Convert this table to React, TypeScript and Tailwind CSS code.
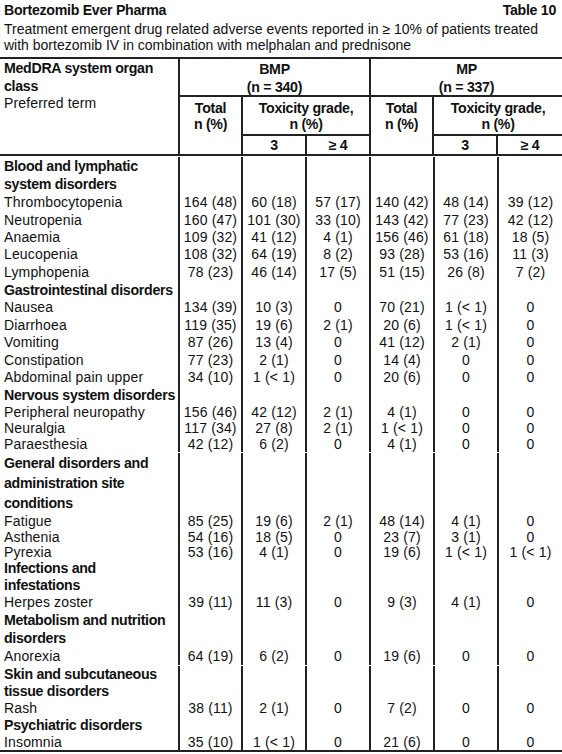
import React from "react";

const FONT = "font-['Liberation_Sans',Arial,sans-serif]";
const B = "border-[#222]";
const BOLD = "font-bold text-[14.2px] tracking-[-0.3px]";

type Row =
  | { kind: "cat"; lines: string[]; cls: string }
  | { kind: "data"; name: string; vals: string[]; cls: string };

const rows: Row[] = [
  { kind: "cat", lines: ["Blood and lymphatic", "system disorders"], cls: "h-[37px] pt-[1px] leading-[18px]" },
  { kind: "data", name: "Thrombocytopenia", vals: ["164 (48)", "60 (18)", "57 (17)", "140 (42)", "48 (14)", "39 (12)"], cls: "h-[18px]" },
  { kind: "data", name: "Neutropenia", vals: ["160 (47)", "101 (30)", "33 (10)", "143 (42)", "77 (23)", "42 (12)"], cls: "h-[18px]" },
  { kind: "data", name: "Anaemia", vals: ["109 (32)", "41 (12)", "4 (1)", "156 (46)", "61 (18)", "18 (5)"], cls: "h-[17px]" },
  { kind: "data", name: "Leucopenia", vals: ["108 (32)", "64 (19)", "8 (2)", "93 (28)", "53 (16)", "11 (3)"], cls: "h-[17px]" },
  { kind: "data", name: "Lymphopenia", vals: ["78 (23)", "46 (14)", "17 (5)", "51 (15)", "26 (8)", "7 (2)"], cls: "h-[18px]" },
  { kind: "cat", lines: ["Gastrointestinal disorders"], cls: "h-[18px] leading-[18px]" },
  { kind: "data", name: "Nausea", vals: ["134 (39)", "10 (3)", "0", "70 (21)", "1 (< 1)", "0"], cls: "h-[17px]" },
  { kind: "data", name: "Diarrhoea", vals: ["119 (35)", "19 (6)", "2 (1)", "20 (6)", "1 (< 1)", "0"], cls: "h-[18px]" },
  { kind: "data", name: "Vomiting", vals: ["87 (26)", "13 (4)", "0", "41 (12)", "2 (1)", "0"], cls: "h-[17px]" },
  { kind: "data", name: "Constipation", vals: ["77 (23)", "2 (1)", "0", "14 (4)", "0", "0"], cls: "h-[18px]" },
  { kind: "data", name: "Abdominal pain upper", vals: ["34 (10)", "1 (< 1)", "0", "20 (6)", "0", "0"], cls: "h-[17px]" },
  { kind: "cat", lines: ["Nervous system disorders"], cls: "h-[18px] leading-[18px]" },
  { kind: "data", name: "Peripheral neuropathy", vals: ["156 (46)", "42 (12)", "2 (1)", "4 (1)", "0", "0"], cls: "h-[16px]" },
  { kind: "data", name: "Neuralgia", vals: ["117 (34)", "27 (8)", "2 (1)", "1 (< 1)", "0", "0"], cls: "h-[16px]" },
  { kind: "data", name: "Paraesthesia", vals: ["42 (12)", "6 (2)", "0", "4 (1)", "0", "0"], cls: "h-[16px]" },
  { kind: "cat", lines: ["General disorders and", "administration site", "conditions"], cls: "h-[61px] pt-[1px] leading-[20px]" },
  { kind: "data", name: "Fatigue", vals: ["85 (25)", "19 (6)", "2 (1)", "48 (14)", "4 (1)", "0"], cls: "h-[16px]" },
  { kind: "data", name: "Asthenia", vals: ["54 (16)", "18 (5)", "0", "23 (7)", "3 (1)", "0"], cls: "h-[16px]" },
  { kind: "data", name: "Pyrexia", vals: ["53 (16)", "4 (1)", "0", "19 (6)", "1 (< 1)", "1 (< 1)"], cls: "h-[15px]" },
  { kind: "cat", lines: ["Infections and", "infestations"], cls: "h-[34px] leading-[17px]" },
  { kind: "data", name: "Herpes zoster", vals: ["39 (11)", "11 (3)", "0", "9 (3)", "4 (1)", "0"], cls: "h-[17px]" },
  { kind: "cat", lines: ["Metabolism and nutrition", "disorders"], cls: "h-[36px] leading-[18px]" },
  { kind: "data", name: "Anorexia", vals: ["64 (19)", "6 (2)", "0", "19 (6)", "0", "0"], cls: "h-[18px]" },
  { kind: "cat", lines: ["Skin and subcutaneous", "tissue disorders"], cls: "h-[35px] pt-[1px] leading-[17px]" },
  { kind: "data", name: "Rash", vals: ["38 (11)", "2 (1)", "0", "7 (2)", "0", "0"], cls: "h-[17px]" },
  { kind: "cat", lines: ["Psychiatric disorders"], cls: "h-[17px] leading-[17px]" },
  { kind: "data", name: "Insomnia", vals: ["35 (10)", "1 (< 1)", "0", "21 (6)", "0", "0"], cls: "h-[16px]" },
];

const colW = ["w-[63px]", "w-[64px]", "w-[64px]", "w-[64px]", "w-[64px]", "w-[65px]"];

function BodyRow({ r }: { r: Row }) {
  if (r.kind === "cat") {
    return (
      <div className={`flex ${r.cls}`}>
        <div className={`w-[178px] pl-1 whitespace-nowrap ${BOLD}`}>
          {r.lines.map((l, i) => (
            <div key={i}>{l}</div>
          ))}
        </div>
        {colW.map((w, i) => (
          <div key={i} className={`${w} border-l-2 ${B}`} />
        ))}
      </div>
    );
  }
  return (
    <div className={`flex items-stretch ${r.cls}`}>
      <div className="w-[178px] pl-1 flex items-center whitespace-nowrap">{r.name}</div>
      {colW.map((w, i) => (
        <div key={i} className={`${w} border-l-2 ${B} flex items-center justify-center whitespace-nowrap`}>
          {r.vals[i]}
        </div>
      ))}
    </div>
  );
}

function Group({ title, n, wide }: { title: string; n: string; wide?: boolean }) {
  return (
    <div className={`${wide ? "w-[193px]" : "w-[191px]"} border-l-2 ${B} flex flex-col`}>
      <div className={`h-[38px] border-b-2 ${B} text-center pt-[1px] leading-[18px] ${BOLD}`}>
        <div>{title}</div>
        <div>{n}</div>
      </div>
      <div className="flex h-[57px]">
        <div className={`${wide ? "w-[62px]" : "w-[61px]"} text-center pt-[3px] leading-[16px] ${BOLD}`}>
          <div>Total</div>
          <div>n (%)</div>
        </div>
        <div className={`${wide ? "w-[130px]" : "w-[128px]"} border-l-2 ${B} flex flex-col`}>
          <div className={`h-[39px] border-b-2 ${B} text-center pt-[3px] leading-[16px] ${BOLD}`}>
            <div>Toxicity grade,</div>
            <div>n (%)</div>
          </div>
          <div className={`flex h-[18px] leading-[18px] ${BOLD}`}>
            <div className="w-[62px] text-center">3</div>
            <div className={`${wide ? "w-[66px]" : "w-[64px]"} border-l-2 ${B} text-center`}>≥ 4</div>
          </div>
        </div>
      </div>
    </div>
  );
}

export default function App() {
  return (
    <div className={`w-[562px] h-[754px] overflow-hidden bg-white text-[#111] text-[14px] tracking-[0.15px] ${FONT}`}>
      <div className={`flex justify-between pl-1 pr-[6px] pt-[2px] leading-[17px] ${BOLD}`}>
        <span>Bortezomib Ever Pharma</span>
        <span>Table 10</span>
      </div>
      <div className="pl-1 mt-[2px] leading-[16px] whitespace-nowrap tracking-normal">
        <div>Treatment emergent drug related adverse events reported in ≥ 10% of patients treated</div>
        <div>with bortezomib IV in combination with melphalan and prednisone</div>
      </div>
      <div className={`mt-[4px] border-t-2 ${B}`}>
        <div className={`flex h-[97px] border-b-2 ${B}`}>
          <div className="w-[178px] pl-1 pt-[1px] leading-[17.5px]">
            <div className={BOLD}>
              <div>MedDRA system organ</div>
              <div>class</div>
            </div>
            <div>Preferred term</div>
          </div>
          <Group title="BMP" n="(n = 340)" />
          <Group title="MP" n="(n = 337)" wide />
        </div>
        <div className={`border-b-2 ${B}`}>
          {rows.map((r, i) => (
            <BodyRow key={i} r={r} />
          ))}
        </div>
      </div>
    </div>
  );
}
